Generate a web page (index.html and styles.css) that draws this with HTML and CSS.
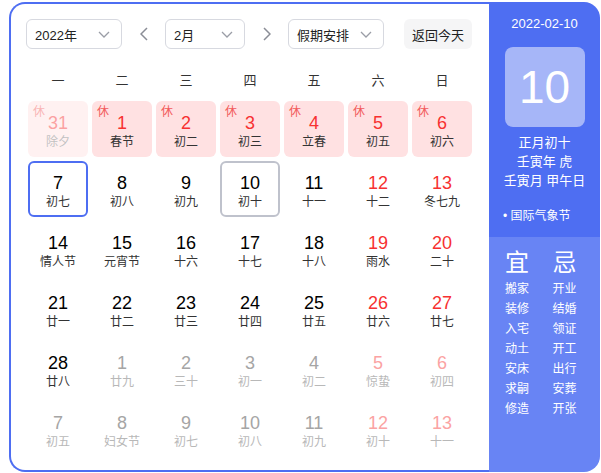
FILE: index.html
```html
<!DOCTYPE html>
<html lang="zh">
<head>
<meta charset="utf-8">
<link rel="stylesheet" href="styles.css">
</head>
<body>
<div class="calendar">
  <div class="main">
    <div class="controls">
      <div class="select year"><span>2022年</span><svg class="chev" width="12" height="7" viewBox="0 0 12 7"><path d="M1 1l5 5 5-5" fill="none" stroke="#9a9da6" stroke-width="1.3"/></svg></div>
      <div class="arrow"><svg width="8" height="14" viewBox="0 0 8 14"><path d="M7 1L1 7l6 6" fill="none" stroke="#8a8d96" stroke-width="1.5"/></svg></div>
      <div class="select month"><span>2月</span><svg class="chev" width="12" height="7" viewBox="0 0 12 7"><path d="M1 1l5 5 5-5" fill="none" stroke="#9a9da6" stroke-width="1.3"/></svg></div>
      <div class="arrow"><svg width="8" height="14" viewBox="0 0 8 14"><path d="M1 1l6 6-6 6" fill="none" stroke="#8a8d96" stroke-width="1.5"/></svg></div>
      <div class="select holiday"><span>假期安排</span><svg class="chev" width="12" height="7" viewBox="0 0 12 7"><path d="M1 1l5 5 5-5" fill="none" stroke="#9a9da6" stroke-width="1.3"/></svg></div>
      <div class="today-btn">返回今天</div>
    </div>
    <div class="weekdays">
      <span>一</span><span>二</span><span>三</span><span>四</span><span>五</span><span>六</span><span>日</span>
    </div>
    <div class="grid">
      <div class="cell rest faded"><i class="tag">休</i><b>31</b><em>除夕</em></div>
      <div class="cell rest"><i class="tag">休</i><b>1</b><em>春节</em></div>
      <div class="cell rest"><i class="tag">休</i><b>2</b><em>初二</em></div>
      <div class="cell rest"><i class="tag">休</i><b>3</b><em>初三</em></div>
      <div class="cell rest"><i class="tag">休</i><b>4</b><em>立春</em></div>
      <div class="cell rest"><i class="tag">休</i><b>5</b><em>初五</em></div>
      <div class="cell rest"><i class="tag">休</i><b>6</b><em>初六</em></div>

      <div class="cell selected"><b>7</b><em>初七</em></div>
      <div class="cell"><b>8</b><em>初八</em></div>
      <div class="cell"><b>9</b><em>初九</em></div>
      <div class="cell today"><b>10</b><em>初十</em></div>
      <div class="cell"><b>11</b><em>十一</em></div>
      <div class="cell weekend"><b>12</b><em>十二</em></div>
      <div class="cell weekend"><b>13</b><em>冬七九</em></div>

      <div class="cell"><b>14</b><em>情人节</em></div>
      <div class="cell"><b>15</b><em>元宵节</em></div>
      <div class="cell"><b>16</b><em>十六</em></div>
      <div class="cell"><b>17</b><em>十七</em></div>
      <div class="cell"><b>18</b><em>十八</em></div>
      <div class="cell weekend"><b>19</b><em>雨水</em></div>
      <div class="cell weekend"><b>20</b><em>二十</em></div>

      <div class="cell"><b>21</b><em>廿一</em></div>
      <div class="cell"><b>22</b><em>廿二</em></div>
      <div class="cell"><b>23</b><em>廿三</em></div>
      <div class="cell"><b>24</b><em>廿四</em></div>
      <div class="cell"><b>25</b><em>廿五</em></div>
      <div class="cell weekend"><b>26</b><em>廿六</em></div>
      <div class="cell weekend"><b>27</b><em>廿七</em></div>

      <div class="cell"><b>28</b><em>廿八</em></div>
      <div class="cell other"><b>1</b><em>廿九</em></div>
      <div class="cell other"><b>2</b><em>三十</em></div>
      <div class="cell other"><b>3</b><em>初一</em></div>
      <div class="cell other"><b>4</b><em>初二</em></div>
      <div class="cell other weekend"><b>5</b><em>惊蛰</em></div>
      <div class="cell other weekend"><b>6</b><em>初四</em></div>

      <div class="cell other"><b>7</b><em>初五</em></div>
      <div class="cell other"><b>8</b><em>妇女节</em></div>
      <div class="cell other"><b>9</b><em>初七</em></div>
      <div class="cell other"><b>10</b><em>初八</em></div>
      <div class="cell other"><b>11</b><em>初九</em></div>
      <div class="cell other weekend"><b>12</b><em>初十</em></div>
      <div class="cell other weekend"><b>13</b><em>十一</em></div>
    </div>
  </div>
  <div class="side">
    <div class="side-top">
      <div class="side-date">2022-02-10</div>
      <div class="big-day">10</div>
      <div class="lunar">
        <div>正月初十</div>
        <div>壬寅年 虎</div>
        <div>壬寅月 甲午日</div>
      </div>
      <div class="festival">• 国际气象节</div>
    </div>
    <div class="side-bottom">
      <div class="col">
        <div class="col-title">宜</div>
        <div>搬家</div><div>装修</div><div>入宅</div><div>动土</div><div>安床</div><div>求嗣</div><div>修造</div>
      </div>
      <div class="col">
        <div class="col-title">忌</div>
        <div>开业</div><div>结婚</div><div>领证</div><div>开工</div><div>出行</div><div>安葬</div><div>开张</div>
      </div>
    </div>
  </div>
</div>
</body>
</html>
```

FILE: styles.css
```css
* { box-sizing: border-box; }
html, body { margin: 0; padding: 0; background: #fff; }
body {
  font-family: "Liberation Sans", "Noto Sans CJK SC", sans-serif;
  color: #333;
}
.calendar {
  display: flex;
  margin: 2px 1px 0 9px;
  height: 470px;
  width: 591px;
}
.main {
  width: 480px;
  border: 2px solid #4e6ef2;
  border-right: none;
  border-radius: 16px 0 0 16px;
  padding: 15px 0 0 15px;
}
.controls {
  display: flex;
  align-items: center;
  height: 30px;
}
.select {
  height: 30px;
  border: 1px solid #d7d9e0;
  border-radius: 6px;
  display: flex;
  align-items: center;
  justify-content: space-between;
  padding: 0 11px 0 8px;
  font-size: 13px;
  color: #222;
}
.select.year { width: 96px; }
.select.month { width: 80px; }
.select.holiday { width: 96px; }
.chev { display: block; }
.arrow {
  width: 43px;
  display: flex;
  justify-content: center;
  align-items: center;
}
.today-btn {
  margin-left: 20px;
  width: 68px;
  height: 30px;
  border-radius: 6px;
  background: #f5f5f6;
  font-size: 13px;
  color: #222;
  display: flex;
  align-items: center;
  justify-content: center;
}
.weekdays {
  display: grid;
  grid-template-columns: repeat(7, 60px);
  column-gap: 4px;
  padding-left: 2px;
  margin-top: 20px;
  height: 24px;
  line-height: 24px;
  font-size: 13px;
  color: #333;
  text-align: center;
}
.grid {
  margin-top: 8px;
  padding-left: 2px;
  display: grid;
  grid-template-columns: repeat(7, 60px);
  grid-auto-rows: 56px;
  gap: 4px;
}
.cell {
  position: relative;
  border-radius: 6px;
  text-align: center;
  padding-top: 11px;
  border: 2px solid transparent;
}
.cell b {
  display: block;
  font-weight: normal;
  font-size: 18px;
  line-height: 21px;
  margin-top: -1px;
  color: #000;
}
.cell em {
  display: block;
  font-style: normal;
  font-size: 12px;
  line-height: 16px;
  color: #333;
}
.cell .tag {
  position: absolute;
  left: 3px;
  top: 2px;
  font-style: normal;
  font-size: 12px;
  line-height: 14px;
  color: #f25a5a;
}
.cell.rest { background: #ffe1e2; }
.cell.rest b { color: #f73131; }
.cell.faded { opacity: 0.45; }
.cell.faded em { color: #777; }
.cell.weekend b { color: #f73131; }
.cell.selected { border-color: #4e6ef2; }
.cell.today { border-color: #bfc2cc; }
.cell.other b { color: #a5a5a5; }
.cell.other em { color: #b8b8b8; }
.cell.other.weekend b { color: #fba3a3; }

.side {
  width: 111px;
  display: flex;
  flex-direction: column;
  border-radius: 0 16px 16px 0;
  overflow: hidden;
  color: #fff;
}
.side-top {
  background: #4e6ef2;
  height: 235px;
  padding-top: 13px;
  display: flex;
  flex-direction: column;
  align-items: center;
}
.side-date {
  font-size: 13px;
  line-height: 18px;
}
.big-day {
  margin-top: 14px;
  width: 80px;
  height: 80px;
  border-radius: 8px;
  background: #a6b6f8;
  font-size: 46px;
  line-height: 80px;
  text-align: center;
  color: #fff;
}
.lunar {
  margin-top: 6px;
  font-size: 13px;
  line-height: 19px;
  text-align: center;
}
.festival {
  margin-top: 17px;
  align-self: flex-start;
  padding-left: 14px;
  font-size: 12px;
  line-height: 18px;
}
.side-bottom {
  flex: 1;
  background: #6884f4;
  display: flex;
  padding: 12px 0 0 16px;
}
.col {
  width: 56px;
  font-size: 12px;
  line-height: 20px;
}
.col-title {
  font-size: 24px;
  line-height: 28px;
  margin-bottom: 2px;
}
```
